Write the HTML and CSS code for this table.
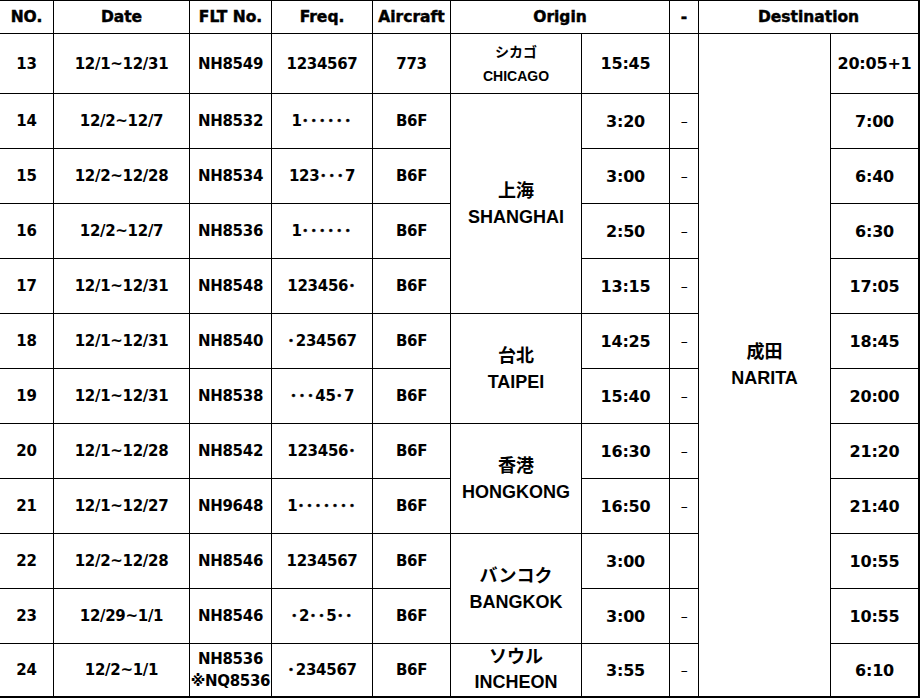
FILE: index.html
```html
<!DOCTYPE html>
<html lang="ja">
<head>
<meta charset="utf-8">
<title>Flight schedule</title>
<link rel="stylesheet" href="styles.css">
</head>
<body>
<table class="sched">
  <colgroup>
    <col class="c-no"><col class="c-date"><col class="c-flt"><col class="c-freq"><col class="c-ac">
    <col class="c-ocity"><col class="c-otime"><col class="c-dash"><col class="c-dcity"><col class="c-dtime">
  </colgroup>
  <tr class="row-head">
    <th>NO.</th><th>Date</th><th>FLT No.</th><th>Freq.</th><th>Aircraft</th>
    <th colspan="2">Origin</th><th>-</th><th colspan="2" class="last">Destination</th>
  </tr>
  <tr class="row-first">
    <td>13</td><td>12/1~12/31</td><td>NH8549</td><td class="freq">1234567</td><td>773</td>
    <td class="city city-sm">シカゴ<br>CHICAGO</td><td class="time">15:45</td><td class="dash"></td>
    <td class="city end" rowspan="12">成田<br>NARITA</td><td class="time last">20:05+1</td>
  </tr>
  <tr class="row">
    <td>14</td><td>12/2~12/7</td><td>NH8532</td><td class="freq">1<span class="dot">･･････</span></td><td>B6F</td>
    <td class="city" rowspan="4">上海<br>SHANGHAI</td><td class="time">3:20</td><td class="dash">–</td>
    <td class="time last">7:00</td>
  </tr>
  <tr class="row">
    <td>15</td><td>12/2~12/28</td><td>NH8534</td><td class="freq">123<span class="dot">･･･</span>7</td><td>B6F</td>
    <td class="time">3:00</td><td class="dash">–</td><td class="time last">6:40</td>
  </tr>
  <tr class="row">
    <td>16</td><td>12/2~12/7</td><td>NH8536</td><td class="freq">1<span class="dot">･･････</span></td><td>B6F</td>
    <td class="time">2:50</td><td class="dash">–</td><td class="time last">6:30</td>
  </tr>
  <tr class="row">
    <td>17</td><td>12/1~12/31</td><td>NH8548</td><td class="freq">123456<span class="dot">･</span></td><td>B6F</td>
    <td class="time">13:15</td><td class="dash">–</td><td class="time last">17:05</td>
  </tr>
  <tr class="row">
    <td>18</td><td>12/1~12/31</td><td>NH8540</td><td class="freq"><span class="dot">･</span>234567</td><td>B6F</td>
    <td class="city" rowspan="2">台北<br>TAIPEI</td><td class="time">14:25</td><td class="dash">–</td>
    <td class="time last">18:45</td>
  </tr>
  <tr class="row">
    <td>19</td><td>12/1~12/31</td><td>NH8538</td><td class="freq"><span class="dot">･･･</span>45<span class="dot">･</span>7</td><td>B6F</td>
    <td class="time">15:40</td><td class="dash">–</td><td class="time last">20:00</td>
  </tr>
  <tr class="row">
    <td>20</td><td>12/1~12/28</td><td>NH8542</td><td class="freq">123456<span class="dot">･</span></td><td>B6F</td>
    <td class="city" rowspan="2">香港<br>HONGKONG</td><td class="time">16:30</td><td class="dash">–</td>
    <td class="time last">21:20</td>
  </tr>
  <tr class="row">
    <td>21</td><td>12/1~12/27</td><td>NH9648</td><td class="freq">1<span class="dot">･･･････</span></td><td>B6F</td>
    <td class="time">16:50</td><td class="dash">–</td><td class="time last">21:40</td>
  </tr>
  <tr class="row">
    <td>22</td><td>12/2~12/28</td><td>NH8546</td><td class="freq">1234567</td><td>B6F</td>
    <td class="city" rowspan="2">バンコク<br>BANGKOK</td><td class="time">3:00</td><td class="dash"></td>
    <td class="time last">10:55</td>
  </tr>
  <tr class="row">
    <td>23</td><td>12/29~1/1</td><td>NH8546</td><td class="freq"><span class="dot">･</span>2<span class="dot">･･</span>5<span class="dot">･･</span></td><td>B6F</td>
    <td class="time">3:00</td><td class="dash">–</td><td class="time last">10:55</td>
  </tr>
  <tr class="row-last">
    <td>24</td><td>12/2~1/1</td><td class="flt2">NH8536<br>※NQ8536</td><td class="freq"><span class="dot">･</span>234567</td><td>B6F</td>
    <td class="city city-two">ソウル<br>INCHEON</td><td class="time">3:55</td><td class="dash">–</td>
    <td class="time last">6:10</td>
  </tr>
</table>
</body>
</html>
```

FILE: styles.css
```css
html, body {
  margin: 0;
  padding: 0;
  background: #fff;
}

.sched {
  border-collapse: separate;
  border-spacing: 0;
  table-layout: fixed;
  width: 922px;
  margin: -1px 0 0 -2px;
  border: 2px solid #000;
  color: #000;
  font-family: "DejaVu Sans", "Noto Sans CJK JP", sans-serif;
  font-weight: 700;
  font-size: 15px;
  letter-spacing: -0.3px;
}

.sched th,
.sched td {
  padding: 0;
  border-right: 1px solid #000;
  border-bottom: 1px solid #000;
  text-align: center;
  vertical-align: middle;
  white-space: nowrap;
  box-sizing: border-box;
}

.sched .last { border-right: none; }
.sched .row-last td,
.sched td.end { border-bottom: none; }

.c-no { width: 54px; }
.c-date { width: 136px; }
.c-flt { width: 82px; }
.c-freq { width: 101px; }
.c-ac { width: 78px; }
.c-ocity { width: 131px; }
.c-otime { width: 88px; }
.c-dash { width: 29px; }
.c-dcity { width: 132px; }
.c-dtime { width: 87px; }

.row-head { height: 33px; }
.row-first { height: 60px; }
.row { height: 55px; }
.row-last { height: 52px; }

.sched th {
  font-size: 15.5px;
  font-weight: 700;
  letter-spacing: 0;
  -webkit-text-stroke: 0.45px #000;
  padding-bottom: 1px;
}

.freq {
  font-size: 15px;
  letter-spacing: -0.3px;
}

.dot {
  font-family: "Noto Sans CJK JP", sans-serif;
  font-size: 15px;
  line-height: 0;
  letter-spacing: 1px;
  -webkit-text-stroke: 0.5px #000;
}

.time {
  font-size: 16px;
  letter-spacing: -0.2px;
}

.dash {
  font-weight: 400;
  font-size: 14px;
}

.city {
  font-family: "Liberation Sans", "Noto Sans CJK JP", sans-serif;
  font-size: 18px;
  line-height: 26px;
  letter-spacing: 0;
}

.city-sm {
  font-size: 14px;
  line-height: 24px;
}

.city-two { line-height: 25px; }

.flt2 { line-height: 22px; }
```
